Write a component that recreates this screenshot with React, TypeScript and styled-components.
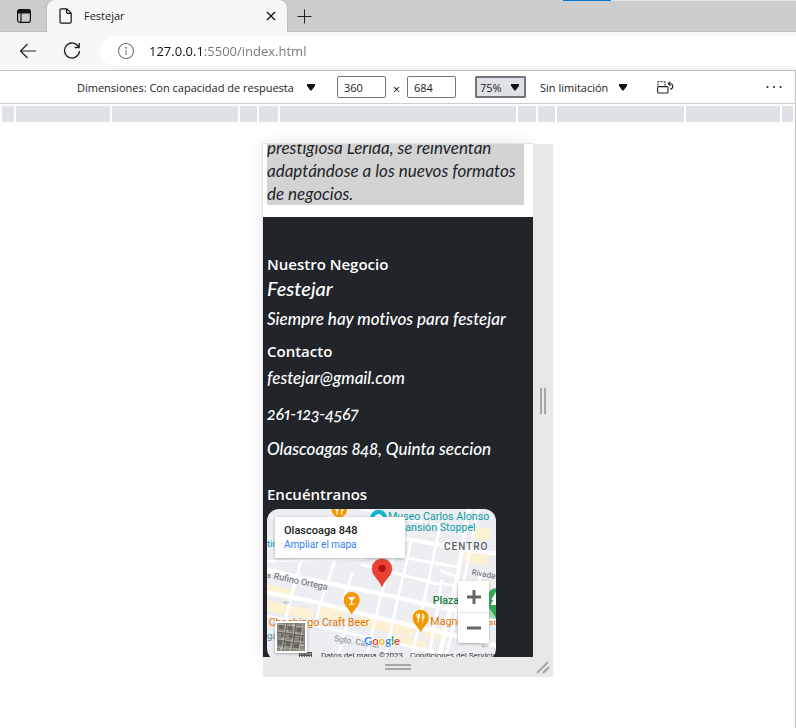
import React from "react";
import styled, { createGlobalStyle, css } from "styled-components";

const uiFont = `"Open Sans", "Noto Sans", sans-serif`;
const pageFont = `Lato, "Noto Sans", sans-serif`;
const mapFont = `Roboto, "Liberation Sans", sans-serif`;

const GlobalStyle = createGlobalStyle`
  *, *::before, *::after { box-sizing: border-box; }
  html, body, #root { height: 100%; }
  body { margin: 0; background: #fff; color: #1b1b1b; font-family: ${uiFont}; font-size: 11px; }
  h2, p { margin: 0; }
  button, input, select { font: inherit; color: inherit; margin: 0; }
`;

const BrowserWindow = styled.div`
  display: flex;
  flex-direction: column;
  min-height: 100vh;
  overflow: hidden;
`;

/* ---------- tab strip ---------- */

const TabStrip = styled.header`
  position: relative;
  display: flex;
  align-items: stretch;
  height: 32px;
  background: #cdcdcd;
  box-shadow: inset 0 -1px #c0c0c0;
`;

const IconButton = styled.button<{ $width: number }>`
  display: inline-flex;
  align-items: center;
  justify-content: center;
  flex: none;
  width: ${(p) => p.$width}px;
  padding: 0;
  border: 0;
  background: none;
`;

const Tab = styled.div`
  display: flex;
  align-items: center;
  width: 240px;
  padding: 0 6px 0 12px;
  border-radius: 8px 8px 0 0;
  background: #f7f7f7;
  box-shadow: 0 0 2px #999;
  clip-path: inset(0 -3px 0 -3px);
`;

const TabTitle = styled.span`
  flex: 1;
  margin-left: 11px;
  line-height: 16px;
`;

const EdgeMarker = styled.div`
  position: absolute;
  top: 0;
  right: 0;
  width: 233px;
  height: 1px;
  border-left: 48px solid #0078d7;
  background: #e6e6e6;
`;

/* ---------- navigation bar ---------- */

const NavBar = styled.nav`
  display: flex;
  align-items: center;
  height: 39px;
  padding-left: 6px;
  border-bottom: 1px solid #bdbdbd;
  background: #f7f7f7;
`;

const AddressBar = styled.label`
  display: flex;
  align-items: center;
  flex: 1;
  height: 30px;
  margin-left: 6px;
  padding-left: 17px;
  border-radius: 15px 0 0 15px;
  background: #fff;
`;

/* The host part of the address is dark, the rest is grey. */
const AddressInput = styled.input`
  flex: 1;
  margin-left: 14px;
  padding: 0;
  border: 0;
  outline: none;
  background: linear-gradient(90deg, #111 54px, #767676 54px);
  background-clip: text;
  color: transparent;
  font-size: 13px;
  line-height: 20px;
`;

/* ---------- device toolbar ---------- */

const DevTools = styled.main`
  display: flex;
  flex-direction: column;
  flex: 1;
  box-shadow: inset -1px 0 #c4c4c4;
`;

const DeviceBar = styled.div`
  display: flex;
  align-items: center;
  height: 33px;
  padding: 0 14px 0 77px;
  border-bottom: 1px solid #cbcdd1;
`;

const SizeGroup = styled.div`
  display: flex;
  align-items: center;
  margin: 0 19px 0 20px;
`;

const Times = styled.span`
  width: 21px;
  padding-top: 4px;
  text-align: center;
  font-size: 13px;
`;

const SizeInput = styled.input`
  width: 49px;
  height: 22px;
  padding: 0 6px;
  border: 1px solid #767676;
  border-radius: 2px;
  background: #fff;
  outline: none;
`;

const SelectBox = styled.span<{ $width: number; $active?: boolean }>`
  position: relative;
  display: inline-flex;
  flex: none;
  width: ${(p) => p.$width}px;

  select {
    width: 100%;
    height: 22px;
    padding: 0;
    border: 0;
    border-radius: 0;
    background: none;
    appearance: none;
    outline: none;
  }

  svg {
    position: absolute;
    top: 7px;
    right: 1px;
    pointer-events: none;
  }

  ${(p) =>
    p.$active &&
    css`
      select {
        padding: 0 3px;
        border: 2px solid #73777d;
        border-radius: 1px;
        background: #dee1e6;
      }
      svg { right: 6px; }
    `}
`;

const ThrottleGroup = styled.div`
  display: flex;
  flex: 1;
  margin-left: 14px;
`;

/* ---------- media query ruler ---------- */

const Ruler = styled.div`
  display: flex;
  gap: 2px;
  height: 16px;
  margin: 2px 3px 0 2px;
`;

const RulerSegment = styled.span<{ $width?: number }>`
  flex: ${(p) => (p.$width ? `0 0 ${p.$width}px` : "1")};
  background: #dee1e6;
`;

/* ---------- emulated device ---------- */

const Stage = styled.section`
  display: grid;
  grid-template-columns: 1fr 270px 1fr;
  grid-template-rows: 513px 20px;
  padding: 22px 0 48px;
`;

const Screen = styled.div`
  grid-column: 2;
  display: flex;
  flex-direction: column;
  overflow: hidden;
  background: #fff;
  box-shadow: 0 0 0 1px #e4e4e4, 0 0 16px #0000001a;
`;

const Handle = styled.div<{ $side: "right" | "bottom" | "corner" }>`
  display: flex;
  align-items: center;
  justify-content: center;
  width: ${(p) => (p.$side === "bottom" ? "auto" : "20px")};
  grid-column: ${(p) => (p.$side === "bottom" ? 2 : 3)};
  background: #e8e8e8;
  z-index: 1;
`;

const Intro = styled.div`
  display: flex;
  flex-direction: column;
  justify-content: flex-end;
  flex: none;
  height: 61px;
  margin: 0 9px 12px 4px;
  overflow: hidden;
  background: #d3d3d3;
`;

const IntroText = styled.p`
  color: #212529;
  font: italic 400 17px/23px ${pageFont};
  font-variant-ligatures: none;
  white-space: pre-line;
`;

const Footer = styled.footer`
  flex: 1;
  padding: 35px 4px 0;
  background: #212529;
  color: #fff;
`;

const FooterTitle = styled.h2<{ $before?: number }>`
  margin-top: ${(p) => p.$before || 0}px;
  font: 600 15px/24px ${uiFont};
`;

const FooterLine = styled.p<{ $before?: number; $large?: boolean }>`
  margin-top: ${(p) => p.$before || 0}px;
  font: italic 500 ${(p) => (p.$large ? 20 : 17)}px/24px ${pageFont};
  font-variant-ligatures: none;
  font-variant-numeric: oldstyle-nums proportional-nums;
  white-space: nowrap;
`;

/* ---------- map ---------- */

const MapFrame = styled.div`
  position: relative;
  width: 229px;
  height: 152px;
  margin-top: 3px;
  overflow: hidden;
  border-radius: 12px;
  background: #eceef1;
  font-family: ${mapFont};

  > svg { display: block; }
`;

const PlaceCard = styled.div`
  position: absolute;
  top: 8px;
  left: 8px;
  width: 130px;
  padding: 7px 9px;
  background: #fff;
  box-shadow: 0 1px 3px #0000004d;
  line-height: 14px;

  strong { display: block; color: #222; font-size: 11px; font-weight: 500; }
  a { display: block; color: #2f7ff0; font-size: 10px; line-height: 13px; text-decoration: none; }
`;

const ZoomControl = styled.div`
  position: absolute;
  top: 72px;
  right: 7px;
  width: 31px;
  background: #fff;
  border-radius: 1px;
  box-shadow: 0 1px 3px #0000004d;

  button {
    display: flex;
    align-items: center;
    justify-content: center;
    width: 100%;
    height: 31px;
    padding: 0;
    border: 0;
    background: none;
  }
  button + button { box-shadow: inset 0 1px #e6e6e6; }
`;

const LayerButton = styled.button`
  position: absolute;
  top: 112px;
  left: 8px;
  width: 32px;
  height: 32px;
  padding: 0;
  border: 2px solid #fff;
  background: #77766f;
  box-shadow: 0 1px 3px #0000004d;

  svg { display: block; }
`;

const Attribution = styled.div`
  position: absolute;
  right: 0;
  bottom: 0;
  left: 32px;
  display: flex;
  gap: 7px;
  color: #333;
  font-size: 8px;
  line-height: 10px;
  white-space: nowrap;

  svg { flex: none; margin: 1px 2px 0 0; }
  a { color: inherit; text-decoration: none; }
`;

const Caret = () => (
  <svg width="10" height="9" viewBox="0 0 10 9" aria-hidden="true">
    <path d="M1 1h8v1.800L5.600 7.500H4.400L1 2.800z" fill="#111" />
  </svg>
);

const WorkspaceIcon = () => (
  <svg width="16" height="16" viewBox="0 0 16 16" fill="none" stroke="#111" strokeWidth="1.200">
    <rect x="1.600" y="1.600" width="12.800" height="12.800" rx="2.500" />
    <path d="M2.200 2.200h11.600v2.600H2.200z" fill="#111" />
    <path d="M5 5v9" />
  </svg>
);

const PageIcon = () => (
  <svg width="14" height="16" viewBox="0 0 14 16" fill="none" stroke="#111" strokeWidth="1.200">
    <path d="M2.500.8h5.300l4.400 4.400v8.300q0 1.700-1.700 1.700h-8Q1 15.200 1 13.500v-11Q1 .8 2.500.8zM7.600 1v3.200q0 1.200 1.200 1.200H12" />
  </svg>
);

const CrossIcon = () => (
  <svg width="10" height="10" viewBox="0 0 10 10" stroke="#111" strokeWidth="1.300">
    <path d="M1 1l8 8M9 1L1 9" />
  </svg>
);

const PlusIcon = () => (
  <svg width="15" height="15" viewBox="0 0 15 15" stroke="#222" strokeWidth="1">
    <path d="M7.500.5v14M.5 7.500h14" />
  </svg>
);

const BackIcon = () => (
  <svg width="18" height="16" viewBox="0 0 18 16" fill="none" stroke="#222" strokeWidth="1.200">
    <path d="M17 8H1.500M8.500 1l-7 7 7 7" />
  </svg>
);

const ReloadIcon = () => (
  <svg width="18" height="18" viewBox="0 0 18 18" fill="none" stroke="#222" strokeWidth="1.300">
    <path d="M15.800 5.300A7.500 7.500 0 1 0 16.500 9M16.200 1v4.500h-4.600" />
  </svg>
);

const InfoIcon = () => (
  <svg width="18" height="18" viewBox="0 0 18 18" fill="none" stroke="#757575" strokeWidth="1.100">
    <circle cx="9" cy="9" r="7.500" />
    <path d="M9 8v5" />
    <circle cx="9" cy="5.700" r=".4" fill="#757575" />
  </svg>
);

const RotateIcon = () => (
  <svg width="17" height="13" viewBox="0 0 17 13" fill="none" stroke="#222" strokeWidth="1.100">
    <rect x=".6" y="5.600" width="10.400" height="6.400" rx="1" />
    <path d="M1 4.500V.8h7v4" strokeDasharray="2 1.100" />
    <path d="M11.800 2.800h1.400q2.500 0 2.500 2.600T13 8M13.300.8l-2 2 2 2" />
  </svg>
);

const MoreIcon = () => (
  <svg width="16" height="4" viewBox="0 0 16 4" fill="#222">
    <circle cx="1.500" cy="2" r="1" />
    <circle cx="8" cy="2" r="1" />
    <circle cx="14.500" cy="2" r="1" />
  </svg>
);

const MapDrawing = () => (
  <svg width="229" height="152" viewBox="15 15 687 456" fontFamily={mapFont} role="img" aria-label="Mapa">
    <g fill="#fcf1d2">
      <path d="M15 240l80 18-8 30-72-15zM15 290l140 28-8 28-132-26zM170 305l80 18-8 30-80-16zM290 335l90 20 80 14-8 30-170-34zM395 392l100 22-6 26-100-22zM490 368l60 14-8 30-54-12z" />
      <path d="M642 66l42 10v36l-50-10zM612 126l70 14-8 46-72-14zM630 230h60v14h-60z" />
    </g>
    <g fill="none" stroke="#fff" strokeLinecap="round">
      <g strokeWidth="13">
        <path d="M10 196l130 30 200 40 170 38 200 46" />
        <path d="M10 264l150 30 200 50 342 80" />
        <path d="M622 10l-38 220-54 236M400 98l190 36 120 16" />
      </g>
      <g strokeWidth="8">
        <path d="M650 10l-48 240-52 216" />
        <path d="M10 172l300 -8M300 182l220 56 80 8M10 335l160 32 200 44 250 56M425 160l165 30" />
        <path d="M392 165l-34 105-46 196M222 160l-44 130-16 60M120 160l-30 110-22 80M448 110l-42 180-38 176M535 60l-40 190-46 216M270 210l-28 80M540 230l-40 236M538 200l50 20M300 15l100 24 180 34M660 200l-16 60M258 350l-32 116" />
      </g>
    </g>
    <g fill="#0d9aa8" fontSize="32">
      <text x="378" y="49">Museo Carlos Alonso</text>
      <text x="402" y="81">Mansión Stoppel</text>
      <text x="15" y="130" fontSize="28">tin</text>
      <circle cx="350" cy="42" r="25" fill="#12b5cb" />
      <path d="M338 36l12-7 12 7v4h-24z" fill="#fff" />
    </g>
    <text x="546" y="139" fontSize="30" fontWeight="500" letterSpacing="3" fill="#5f6368">CENTRO</text>
    <g fill="#62666a" fontSize="27">
      <text x="34" y="224" transform="rotate(12 34 224)">Rufino Ortega</text>
      <text x="15" y="222" fontSize="20">a</text>
      <text x="628" y="212" fontSize="24" transform="rotate(10 628 212)">Rivadavia</text>
      <text x="216" y="411" fontSize="25" fill="#80858a" transform="rotate(9 216 411)">Sgto. Cabral</text>
    </g>
    <g fill="none" stroke="#9aa0a6" strokeWidth="2">
      <path d="M84 296H66l6-6M66 296l6 6M678 426h-18l6-6M660 426l6 6" />
    </g>
    <text x="512" y="299" fontSize="32" fontWeight="500" fill="#188038">Plaza</text>
    <path d="M672 306l30 6v34l-34-8z" fill="#a8dab5" />
    <path d="M702 253c-32 0-32 50-12 70l12 20z" fill="#34a853" />
    <path d="M702 263l-14 24h6l-8 16h16z" fill="#fff" />
    <g fill="#e37400" fontSize="32">
      <text x="20" y="365">Chachingo Craft Beer</text>
      <text x="505" y="364">Magnolia</text>
      <text x="682" y="364" fontSize="24">st</text>
      <text x="15" y="405" fill="#4c8b91" fontSize="28">ga</text>
    </g>
    <g fill="#f29900">
      <path d="M245 288a24 24 0 1 1 48 0c0 18-16 26-24 44-8-18-24-26-24-44z" />
      <path d="M452 341a24 24 0 1 1 48 0c0 18-16 26-24 44-8-18-24-26-24-44z" />
      <circle cx="232" cy="17" r="23" />
    </g>
    <path d="M258 279h22l-9 11v9h6v3h-16v-3h6v-9z" fill="#fff" />
    <g fill="none" stroke="#fff" strokeWidth="3">
      <path d="M465 329v9q0 5 4 5t4-5v-9M469 329v26M482 355v-26q5 2 4 14h-4" />
      <path d="M221 6v9q0 5 4 5t4-5V6M225 6v26M239 32V6q5 2 4 14h-4" />
    </g>
    <path d="M330 194a30 30 0 1 1 60 0c0 21-22 33-30 55-8-22-30-34-30-55z" fill="#ea4335" stroke="#d2382c" />
    <circle cx="360" cy="193" r="11" fill="#b31412" />
    <text x="306" y="423" fontFamily="Lato, sans-serif" fontSize="34" fontWeight="700" stroke="#fff" strokeWidth="5" paintOrder="stroke">
      <tspan fill="#4285f4">G</tspan><tspan fill="#ea4335">o</tspan><tspan fill="#fbbc04">o</tspan><tspan fill="#4285f4">g</tspan><tspan fill="#34a853">l</tspan><tspan fill="#ea4335">e</tspan>
    </text>
  </svg>
);

const Satellite = () => (
  <svg width="28" height="28" viewBox="0 0 28 28" fill="none">
    <path d="M0 0h28v28H0z" fill="#8a877f" />
    <path d="M2 2h5v4H2zM11 3h4v4h-4zM20 5h5v4h-5zM4 11h4v3H4zM12 12h6v3h-6zM22 14h4v4h-4zM1 18h4v4H1zM9 19h4v4H9zM17 21h5v4h-5z" fill="#66655f" />
    <path d="M8 7h3v2H8zM17 9h3v2h-3zM5 15h4v2H5zM14 17h3v2h-3zM23 21h4v2h-4zM3 25h5v2H3zM13 25h3v2h-3zM15 1h4v2h-4z" fill="#b5b2a8" />
    <path d="M0 8l28 4M0 16l28 4M0 24l28 3M0 1l28 3M9 0L5 28M18 0l-4 28M26 0l-4 28" stroke="#b9b7ae" strokeWidth=".8" />
    <path d="M0 9l28 4M0 17l28 4M10 0L6 28M19 0l-4 28" stroke="#4b4c47" strokeWidth=".7" />
  </svg>
);

const KeyboardIcon = () => (
  <svg width="13" height="8" viewBox="0 0 13 8">
    <path d="M0 0h13v8H0z" fill="#555" />
    <path d="M1 2h11M1 4.500h11" stroke="#eee" strokeWidth="1.200" strokeDasharray="1.400 1" />
  </svg>
);

const segments = [undefined, 94, 126, 17, 19, 236, 18, 17, 127, 94, undefined];

export default function App() {
  return (
    <BrowserWindow>
      <GlobalStyle />
      <TabStrip>
        <IconButton $width={47} aria-label="Áreas de trabajo"><WorkspaceIcon /></IconButton>
        <Tab>
          <PageIcon />
          <TabTitle>Festejar</TabTitle>
          <IconButton $width={20} aria-label="Cerrar pestaña"><CrossIcon /></IconButton>
        </Tab>
        <IconButton $width={35} aria-label="Nueva pestaña"><PlusIcon /></IconButton>
        <EdgeMarker />
      </TabStrip>

      <NavBar>
        <IconButton $width={44} aria-label="Atrás"><BackIcon /></IconButton>
        <IconButton $width={44} aria-label="Actualizar"><ReloadIcon /></IconButton>
        <AddressBar>
          <InfoIcon />
          <AddressInput aria-label="Dirección" defaultValue="127.0.0.1:5500/index.html" />
        </AddressBar>
      </NavBar>

      <DevTools>
        <DeviceBar>
          <SelectBox $width={240}>
            <select aria-label="Dimensiones">
              <option>Dimensiones: Con capacidad de respuesta</option>
            </select>
            <Caret />
          </SelectBox>
          <SizeGroup>
            <SizeInput aria-label="Ancho" defaultValue="360" />
            <Times>×</Times>
            <SizeInput aria-label="Alto" defaultValue="684" />
          </SizeGroup>
          <SelectBox $width={51} $active>
            <select aria-label="Zoom"><option>75%</option></select>
            <Caret />
          </SelectBox>
          <ThrottleGroup>
            <SelectBox $width={89}>
              <select aria-label="Limitación"><option>Sin limitación</option></select>
              <Caret />
            </SelectBox>
            <IconButton $width={72} aria-label="Girar"><RotateIcon /></IconButton>
          </ThrottleGroup>
          <IconButton $width={16} aria-label="Más opciones"><MoreIcon /></IconButton>
        </DeviceBar>

        <Ruler>
          {segments.map((width, i) => <RulerSegment key={i} $width={width} />)}
        </Ruler>

        <Stage>
          <Screen>
            <Intro>
              <IntroText>
                {"prestigiosa Lérida, se reinventan\nadaptándose a los nuevos formatos\nde negocios."}
              </IntroText>
            </Intro>
            <Footer>
              <FooterTitle>Nuestro Negocio</FooterTitle>
              <FooterLine $large>Festejar</FooterLine>
              <FooterLine $before={7}>Siempre hay motivos para festejar</FooterLine>
              <FooterTitle $before={8}>Contacto</FooterTitle>
              <FooterLine $before={3}>festejar@gmail.com</FooterLine>
              <FooterLine $before={12}>261-123-4567</FooterLine>
              <FooterLine $before={11}>Olascoagas 848, Quinta seccion</FooterLine>
              <FooterTitle $before={21}>Encuéntranos</FooterTitle>
              <MapFrame>
                <MapDrawing />
                <PlaceCard>
                  <strong>Olascoaga 848</strong>
                  <a href="#mapa">Ampliar el mapa</a>
                </PlaceCard>
                <Attribution>
                  <KeyboardIcon />
                  <span>Datos del mapa ©2023</span>
                  <a href="#condiciones">Condiciones del Servicio</a>
                </Attribution>
                <ZoomControl>
                  <button aria-label="Acercar">
                    <svg width="14" height="14" viewBox="0 0 14 14" stroke="#666" strokeWidth="3"><path d="M7 0v14M0 7h14" /></svg>
                  </button>
                  <button aria-label="Alejar">
                    <svg width="14" height="14" viewBox="0 0 14 14" stroke="#666" strokeWidth="3"><path d="M0 7h14" /></svg>
                  </button>
                </ZoomControl>
                <LayerButton aria-label="Satélite"><Satellite /></LayerButton>
              </MapFrame>
            </Footer>
          </Screen>
          <Handle $side="right">
            <svg width="8" height="26" viewBox="0 0 8 26" fill="#a6a6a6"><path d="M1 0h2v26H1zM5 0h2v26H5z" /></svg>
          </Handle>
          <Handle $side="bottom">
            <svg width="26" height="8" viewBox="0 0 26 8" fill="#a6a6a6"><path d="M0 1h26v2H0zM0 5h26v2H0z" /></svg>
          </Handle>
          <Handle $side="corner">
            <svg width="14" height="14" viewBox="0 0 14 14" stroke="#a6a6a6" strokeWidth="2"><path d="M1 13L12 2M7 13l6-6" /></svg>
          </Handle>
        </Stage>
      </DevTools>
    </BrowserWindow>
  );
}
